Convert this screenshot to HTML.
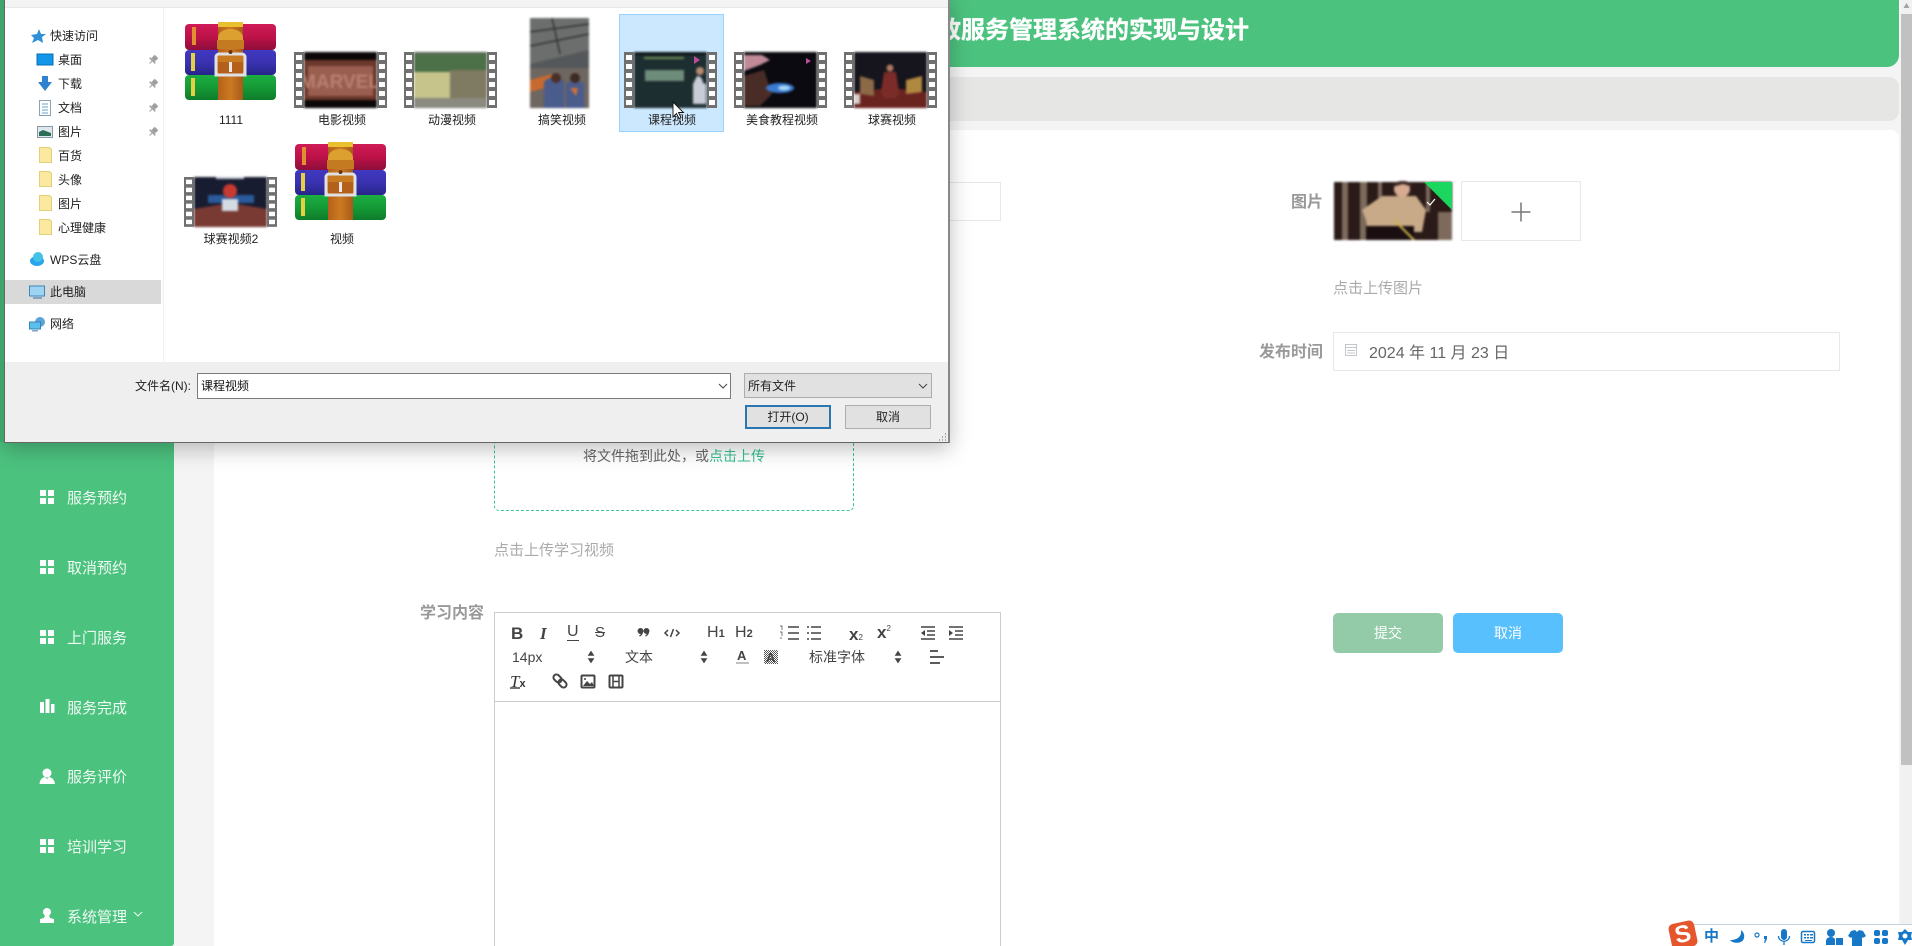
<!DOCTYPE html>
<html lang="zh-CN"><head><meta charset="utf-8"><title>课程视频</title>
<style>
html,body{margin:0;padding:0;width:1912px;height:946px;overflow:hidden;background:#f4f4f4}
body{position:relative;font-family:"Liberation Sans","Noto Sans CJK SC",sans-serif;filter:blur(.3px)}
.a,.t{position:absolute;box-sizing:border-box}
.t{white-space:nowrap;line-height:1}
.m{color:#eefaf2;font-size:15px;left:67px}
.l{color:#999;font-size:16px;font-weight:700}
.h{color:#aaa;font-size:15px}
.n{color:#222;font-size:12px}
.c{color:#222;font-size:12px;width:110px;text-align:center}
svg{position:absolute;overflow:visible}
.im{filter:blur(1.1px)}
</style></head><body>

<!-- page chrome -->
<div class="a" style="left:0;top:0;width:174px;height:946px;background:#4cc27f;border-bottom-right-radius:3px"></div>
<div class="a" style="left:174px;top:-20px;width:1725px;height:87px;background:#4cc27f;border-radius:0 0 12px 12px"></div>
<div class="t" style="left:800px;width:449px;top:19px;text-align:right;color:#fff;font-size:24px;font-weight:700;-webkit-text-stroke:.3px #fff">家政服务管理系统的实现与设计</div>
<div class="a" style="left:174px;top:77px;width:1725px;height:44px;background:#e6e6e5;border-radius:10px"></div>
<div class="a" style="left:214px;top:130px;width:1685px;height:830px;background:#fff;border-radius:8px"></div>
<div class="a" style="left:1901px;top:0;width:11px;height:924px;background:#f1f1f1"></div>
<div class="a" style="left:1901px;top:14px;width:11px;height:751px;background:#c1c1c1"></div>
<svg style="left:0;top:0" width="1912" height="946"><path d="M1906.500 3l3 5h-6z" fill="#a3a3a3"/></svg>

<!-- menu -->
<svg style="left:0;top:0" width="174" height="946" fill="#fff">
<defs><g id="gr"><rect x="40" y="-7" width="6" height="6"/><rect x="48" y="-7" width="6" height="6"/><rect x="40" y="1" width="6" height="6"/><rect x="48" y="1" width="6" height="6"/></g></defs>
<use href="#gr" y="497"/><use href="#gr" y="567"/><use href="#gr" y="637"/><use href="#gr" y="846"/>
<rect x="40" y="702" width="4" height="11"/><rect x="45.500" y="699" width="4" height="14"/><rect x="51" y="704" width="3.500" height="9"/>
<circle cx="47" cy="773" r="4.500"/><path d="M39.500 784c.5-5 3-6.500 5.500-7l2 2 2-2c2.500.5 5.500 2 6 7z"/>
<circle cx="47" cy="912" r="4"/><path d="M45 915h4l1 3 4 1v4H40v-4l4-1z"/>
</svg>
<div class="t m" style="top:491px">服务预约</div>
<div class="t m" style="top:561px">取消预约</div>
<div class="t m" style="top:631px">上门服务</div>
<div class="t m" style="top:701px">服务完成</div>
<div class="t m" style="top:770px">服务评价</div>
<div class="t m" style="top:840px">培训学习</div>
<div class="t m" style="top:910px">系统管理</div>
<svg style="left:0;top:0" width="174" height="946"><path d="M134 912l4 4 4-4" fill="none" stroke="#eefaf2" stroke-width="1"/></svg>

<!-- form -->
<div class="a" style="left:800px;top:182px;width:201px;height:39px;border:1px solid #e8e8e8"></div>
<div class="a" style="left:494px;top:400px;width:360px;height:111px;border:1px dashed #3cc497;border-radius:5px"></div>
<div class="t" style="left:583px;top:449px;font-size:14px;color:#666">将文件拖到此处，或<span style="color:#33c08d">点击上传</span></div>
<div class="t h" style="left:494px;top:543px">点击上传学习视频</div>
<div class="t l" style="left:420px;top:606px">学习内容</div>

<div class="a" style="left:494px;top:612px;width:507px;height:350px;border:1px solid #ccc"></div>
<div class="a" style="left:494px;top:701px;width:507px;height:1px;background:#ccc"></div>
<div class="t" style="left:511px;top:625px;font-size:17px;font-weight:700;color:#444">B</div>
<div class="t" style="left:540px;top:625px;font-size:17px;font-style:italic;font-family:'Liberation Serif',serif;font-weight:700;color:#444">I</div>
<div class="t" style="left:567px;top:624px;font-size:16px;color:#444;border-bottom:1.500px solid #444">U</div>
<div class="t" style="left:595px;top:625px;font-size:15px;color:#444;text-decoration:line-through">S</div>
<div class="t" style="left:707px;top:625px;font-size:16px;color:#444">H<span style="font-size:11px;font-weight:700">1</span></div>
<div class="t" style="left:735px;top:625px;font-size:16px;color:#444">H<span style="font-size:11px;font-weight:700">2</span></div>
<div class="t" style="left:849px;top:626px;font-size:17px;font-weight:700;color:#444">x<span style="font-size:8px;font-weight:400">2</span></div>
<div class="t" style="left:877px;top:624px;font-size:17px;font-weight:700;color:#444">x<span style="font-size:8px;font-weight:400;vertical-align:7px">2</span></div>
<div class="t" style="left:512px;top:650px;font-size:14px;color:#444">14px</div>
<div class="t" style="left:625px;top:650px;font-size:14px;color:#444">文本</div>
<div class="t" style="left:809px;top:650px;font-size:14px;color:#444">标准字体</div>
<div class="t" style="left:737px;top:649px;font-size:13px;font-weight:700;color:#444">A</div>
<svg style="left:0;top:0" width="1912" height="946"><defs><pattern id="ht" width="2" height="2" patternUnits="userSpaceOnUse"><rect width="1" height="1" fill="#555"/><rect x="1" y="1" width="1" height="1" fill="#555"/></pattern></defs><rect x="764" y="650" width="14" height="14" fill="url(#ht)"/></svg>
<div class="t" style="left:766px;top:651px;font-size:13px;font-weight:700;color:#444">A</div>
<div class="t" style="left:510px;top:673px;font-size:17px;font-style:italic;font-family:'Liberation Serif',serif;color:#333;border-bottom:0">T<span style="font-size:11px;font-weight:700;font-style:normal;font-family:'Liberation Sans',sans-serif">x</span></div>
<svg style="left:0;top:0" width="1912" height="946" fill="none" stroke="#444" stroke-width="1.500">
<path d="M510 688h10"/>
<circle cx="640.500" cy="631" r="2.200" fill="#444"/><circle cx="646.500" cy="631" r="2.200" fill="#444"/><path d="M642.500 631c0 2-1 4-3 5M648.500 631c0 2-1 4-3 5" stroke-width="1.300"/>
<path d="M668 630l-3 3 3 3M676 630l3 3-3 3M673.500 629l-3 8" />
<path d="M788 627h11M788 633h11M788 639h11"/><path d="M780 626h2v4M780 632h2v4M780 638h2" stroke-width=".7"/>
<path d="M811 627h10M811 633h10M811 639h10M807 627h2M807 633h2M807 639h2"/>
<path d="M921 627h14M927 631h8M927 635h8M921 639h14"/><path d="M925 630l-4 3 4 3z" fill="#444" stroke="none"/>
<path d="M949 627h14M955 631h8M955 635h8M949 639h14"/><path d="M949 630l4 3-4 3z" fill="#444" stroke="none"/>
<path d="M589 655l2-3 2 3zM589 659l2 3 2-3z" fill="#444"/><path d="M702 655l2-3 2 3zM702 659l2 3 2-3z" fill="#444"/><path d="M896 655l2-3 2 3zM896 659l2 3 2-3z" fill="#444"/>
<path d="M736 663h13" stroke="#aaa" stroke-width="1.500"/>
<path d="M930 651h8M930 657h14M930 663h10" stroke-width="1.800"/>
<g transform="rotate(45 560 681)" stroke-width="2"><rect x="552" y="678" width="9" height="6" rx="3"/><rect x="559" y="678" width="9" height="6" rx="3"/></g>
<rect x="581.500" y="675.500" width="13" height="12" rx="1" stroke-width="2"/><path d="M583 686l4-5 3 3 2-2 2 4z" fill="#444" stroke="none"/><circle cx="585" cy="679" r="1" fill="#444" stroke="none"/>
<rect x="609.500" y="675.500" width="13" height="12" rx="1" stroke-width="2"/><path d="M613 675v13M619 675v13M613 681.500h6"/>
</svg>

<!-- right column -->
<div class="t l" style="left:1291px;top:195px">图片</div>
<svg style="left:1334px;top:182px" width="118" height="58">
<g class="im"><rect width="118" height="58" fill="#2a1a18"/>
<g fill="#7d6a5c"><rect x="8" width="6" height="58"/><rect x="26" width="7" height="58"/><rect x="44" width="4" height="26"/><rect x="104" y="30" width="14" height="28"/><rect x="92" width="4" height="30"/></g>
<path d="M28 28l20-14h34l10 14-4 22H34l-2-12z" fill="#c8aa88"/>
<circle cx="68" cy="7" r="8" fill="#d8ab93"/><path d="M58 5c2-8 20-8 21 0l-10-3z" fill="#3a2522"/>
<rect x="32" y="44" width="48" height="14" fill="#1a0e10"/>
<path d="M60 38l20 20" stroke="#c9b24e" stroke-width="2"/></g>
<path d="M90 0h28v28z" fill="#1bd760"/>
<path d="M93 20l3 3 5-6" stroke="#fff" stroke-width="1.200" fill="none"/>
</svg>
<div class="a" style="left:1461px;top:181px;width:120px;height:60px;border:1px solid #e8e8e8;background:#fff"></div>
<svg style="left:0;top:0" width="1912" height="946"><path d="M1511.500 212h19M1521 202.500v19" stroke="#777" stroke-width="1.500"/></svg>
<div class="t h" style="left:1333px;top:281px">点击上传图片</div>
<div class="t l" style="left:1259px;top:345px">发布时间</div>
<div class="a" style="left:1333px;top:332px;width:507px;height:39px;border:1px solid #e8e8e8"></div>
<svg style="left:0;top:0" width="1912" height="946" fill="none" stroke="#c4c8cc"><rect x="1345.500" y="344.500" width="11" height="11"/><path d="M1345 347.500h12M1347 350.500h8M1347 353h8"/></svg>
<div class="t" style="left:1369px;top:346px;font-size:16px;color:#666">2024 年 11 月 23 日</div>
<div class="t" style="left:1333px;top:613px;width:110px;height:40px;line-height:40px;text-align:center;background:#93cba8;border-radius:5px;color:#fff;font-size:14px">提交</div>
<div class="t" style="left:1453px;top:613px;width:110px;height:40px;line-height:40px;text-align:center;background:#57c0fd;border-radius:5px;color:#fff;font-size:14px">取消</div>

<!-- IME bar -->
<div class="a" style="left:1690px;top:924px;width:222px;height:22px;background:#fff;border-top:1px solid #c4d2e2"></div>
<div class="t" style="left:1670px;top:922px;width:26px;height:26px;line-height:25px;text-align:center;background:#e5562c;border-radius:5px;transform:rotate(-12deg);color:#fff;font-size:24px;font-weight:700">S</div>
<div class="t" style="left:1704px;top:929px;font-size:15px;font-weight:700;color:#1678c6">中</div>
<svg style="left:0;top:0" width="1912" height="946" fill="#1678c6">
<path d="M1741 930c1 6-3 10-11 10 3 4 13 4 14-2 .8-3-.4-6-3-8z"/>
<circle cx="1757" cy="935" r="2" fill="none" stroke="#1678c6" stroke-width="1.200"/><path d="M1764 936h3v3l-2 4h-1l1-4h-1z"/>
<rect x="1781" y="929" width="6" height="11" rx="3"/><path d="M1778.500 936c0 7 11 7 11 0M1784 941v4" fill="none" stroke="#1678c6" stroke-width="1.300"/>
<rect x="1801.500" y="931.500" width="13" height="11" rx="1.500" fill="none" stroke="#1678c6" stroke-width="1.500"/><path d="M1804 934h2v1.500h-2zM1807 934h2v1.500h-2zM1810 934h3v1.500h-3zM1804 937h2v1.500h-2zM1807 937h2v1.500h-2zM1810 937h3v1.500h-3zM1805 940h7v1h-7z"/>
<circle cx="1831" cy="933" r="4"/><path d="M1826 945v-4c0-3 3-4 5-4s3 1 4 2v6z"/><rect x="1836" y="938" width="7" height="7"/>
<path d="M1851 931l4-1 2 2 2-2 4 1 3 5-3 2-1-1v9h-10v-9l-1 1-3-2z"/>
<rect x="1874" y="930" width="6" height="6" rx="2"/><rect x="1882" y="930" width="6" height="6" rx="2"/><rect x="1874" y="938" width="6" height="6" rx="2"/><rect x="1882" y="938" width="6" height="6" rx="2"/>
<path d="M1905 929l3 3h4l-1 4 1 4h-4l-3 5-3-5h-4l1-4-1-4h4z"/><circle cx="1905" cy="936" r="2.500" fill="#fff"/>
</svg>

<!-- dialog -->
<div class="a" style="left:4px;top:-5px;width:946px;height:448px;background:#fff;border:1px solid #666;border-right:2px solid #888;box-shadow:0 6px 20px rgba(0,0,0,.25)"></div>
<div class="a" style="left:5px;top:0;width:943px;height:8px;background:#f3f3f3;border-bottom:1px solid #e8e8e8"></div>
<div class="a" style="left:0;top:0;width:4px;height:442px;background:#3da56b"></div>
<div class="a" style="left:163px;top:8px;width:1px;height:354px;background:#f0f0f0"></div>
<div class="a" style="left:5px;top:362px;width:943px;height:80px;background:#efefef"></div>
<div class="a" style="left:5px;top:280px;width:156px;height:24px;background:#d9d9d9"></div>

<div class="t n" style="left:50px;top:30px">快速访问</div>
<div class="t n" style="left:58px;top:54px">桌面</div>
<div class="t n" style="left:58px;top:78px">下载</div>
<div class="t n" style="left:58px;top:102px">文档</div>
<div class="t n" style="left:58px;top:126px">图片</div>
<div class="t n" style="left:58px;top:150px">百货</div>
<div class="t n" style="left:58px;top:174px">头像</div>
<div class="t n" style="left:58px;top:198px">图片</div>
<div class="t n" style="left:58px;top:222px">心理健康</div>
<div class="t n" style="left:50px;top:254px">WPS云盘</div>
<div class="t n" style="left:50px;top:286px">此电脑</div>
<div class="t n" style="left:50px;top:318px">网络</div>

<svg style="left:0;top:0" width="200" height="340">
<defs>
<g id="pin" transform="translate(153 0) rotate(45)"><rect x="-2.500" y="-5" width="5" height="5" fill="#a0a0a0"/><rect x="-4" y="0" width="8" height="1.500" fill="#a0a0a0"/><rect x="-.5" y="1" width="1" height="4" fill="#a0a0a0"/></g>
<g id="fo"><path d="M39.500 -7.500h10l2 2v13h-12z" fill="#fce9a0" stroke="#e3cf7c"/></g>
</defs>
<path d="M39 29l2 5h5l-4 3 1 6-5-3-6 3 2-5-3-3 6-1z" fill="#2f8fd8"/>
<rect x="37" y="54" width="16" height="11" fill="#1296e8" stroke="#0a6fb5"/>
<path d="M42 76h6v6h4l-7 9-7-9h4z" fill="#2d82d2"/>
<rect x="39.500" y="100.500" width="11" height="15" fill="#fff" stroke="#8aa0b4"/><path d="M42 104h6M42 107h6M42 110h6M42 113h6" stroke="#6aa0c8"/>
<rect x="37.500" y="126.500" width="15" height="11" fill="#dfe8f0" stroke="#8a98a5"/><path d="M39 136v-4l4-2 8 3v3z" fill="#2c6d55"/>
<g transform="translate(0 60)"><use href="#pin"/></g><g transform="translate(0 84)"><use href="#pin"/></g><g transform="translate(0 108)"><use href="#pin"/></g><g transform="translate(0 132)"><use href="#pin"/></g>
<use href="#fo" y="155"/><use href="#fo" y="179"/><use href="#fo" y="203"/><use href="#fo" y="227"/>
<ellipse cx="37" cy="261" rx="7" ry="5" fill="#2ba5ea"/><circle cx="38" cy="257" r="5" fill="#43c2e6"/>
<rect x="29.500" y="286" width="15" height="10" fill="#9ed4f2" stroke="#3d87ba"/><rect x="33" y="297" width="9" height="2" fill="#7da6c2"/>
<circle cx="40" cy="322" r="5" fill="#5aa4d8"/><rect x="29.500" y="322" width="11" height="7" fill="#5cc0ee" stroke="#3585b8"/><rect x="32" y="330" width="6" height="1.500" fill="#7da6c2"/>
</svg>

<!-- file icons -->
<div class="a" style="left:619px;top:14px;width:105px;height:118px;background:#cce8ff;border:1px solid #99d1ff"></div>
<svg style="left:0;top:0" width="948" height="260">
<defs>
<linearGradient id="r" x2="0" y2="1"><stop offset="0" stop-color="#cf1a55"/><stop offset=".5" stop-color="#bd1248"/><stop offset="1" stop-color="#8e0e3a"/></linearGradient>
<linearGradient id="b" x2="0" y2="1"><stop offset="0" stop-color="#4038c0"/><stop offset=".5" stop-color="#3a32b0"/><stop offset="1" stop-color="#26248a"/></linearGradient>
<linearGradient id="g" x2="0" y2="1"><stop offset="0" stop-color="#1cae40"/><stop offset=".5" stop-color="#149a36"/><stop offset="1" stop-color="#0e7c2a"/></linearGradient>
<linearGradient id="s" x2="1" y2="0"><stop offset="0" stop-color="#b5601a"/><stop offset=".5" stop-color="#cc7a22"/><stop offset="1" stop-color="#a85a18"/></linearGradient>
<g id="rar">
<rect x="0" y="2" width="91" height="26" rx="4" fill="url(#r)"/>
<rect x="0" y="28" width="91" height="25" rx="4" fill="url(#b)"/>
<rect x="0" y="53" width="91" height="25" rx="4" fill="url(#g)"/>
<rect x="7" y="5" width="4" height="18" fill="#e09030"/><rect x="6" y="31" width="4" height="18" fill="#e4d040"/><rect x="6" y="56" width="4" height="18" fill="#e4d040"/>
<rect x="33" y="0" width="25" height="78" fill="url(#s)"/>
<path d="M33 16c0-12 25-12 25 0v8H33z" fill="#dca030"/><rect x="33" y="0" width="25" height="5" fill="#e8c030"/>
<rect x="32" y="18" width="27" height="9" fill="#c47a20"/>
<rect x="31" y="32" width="29" height="21" rx="3" fill="#c87a22" stroke="#dfe1e4" stroke-width="3"/>
<rect x="33" y="40" width="25" height="14" fill="#b5601a"/>
<path d="M31 40v13h29V40" fill="none" stroke="#dfe1e4" stroke-width="3"/>
<rect x="44" y="40" width="3" height="10" fill="#e8e8e8"/><circle cx="45.500" cy="30" r="2" fill="#6a3410"/>
</g>
<g id="holes" fill="#fff"><rect x="2" y="3" width="6" height="5"/><rect x="2" y="12" width="6" height="5"/><rect x="2" y="21" width="6" height="5"/><rect x="2" y="30" width="6" height="5"/><rect x="2" y="39" width="6" height="5"/><rect x="2" y="48" width="6" height="5"/></g>
<g id="fr"><rect x="0" y="0" width="10" height="56" fill="#707070"/><rect x="83" y="0" width="10" height="56" fill="#707070"/><use href="#holes"/><use href="#holes" x="83"/></g>
</defs>
<use href="#rar" x="185" y="22"/>
<use href="#rar" x="295" y="142"/>

<g transform="translate(294 52)"><g class="im"><rect x="10" width="73" height="56" fill="#0c0808"/><rect x="10" y="8" width="73" height="40" fill="#6a382c"/><rect x="14" y="14" width="65" height="30" fill="#9a5e50"/><text x="46" y="36" font-size="19" font-weight="700" text-anchor="middle" fill="#b88070" font-family="Liberation Sans">MARVEL</text></g><use href="#fr"/></g>
<g transform="translate(404 52)"><g class="im"><rect x="10" width="73" height="56" fill="#5a6a58"/><rect x="10" y="2" width="73" height="18" fill="#4c7048"/><rect x="10" y="20" width="36" height="26" fill="#c6c48a"/><rect x="46" y="18" width="37" height="30" fill="#7f7a62"/><rect x="10" y="46" width="73" height="10" fill="#8a8a80"/></g><use href="#fr"/></g>
<g transform="translate(530 18)"><g class="im"><rect width="59" height="90" fill="#55585a"/><path d="M0 0h59v32L0 46z" fill="#6c6e6e"/><path d="M0 14l59-8M0 28l59-12M22 0l8 36" stroke="#333" stroke-width="1.500" fill="none"/><rect y="50" width="59" height="40" fill="#6e6660"/><path d="M0 62l22-6v12l-22 6z" fill="#c86a30"/><path d="M14 64c4-6 16-6 20 0v26H14z" fill="#4a5c8c"/><path d="M36 66c4-4 14-4 18 0v24H36z" fill="#4a5c8c"/><circle cx="26" cy="60" r="5" fill="#4a3028"/><circle cx="45" cy="60" r="5" fill="#3c2a24"/><path d="M40 70l8 0-2 8z" fill="#d0703a"/></g></g>
<g transform="translate(624 52)"><g class="im"><rect x="10" width="73" height="56" fill="#1d2e30"/><rect x="10" width="73" height="3" fill="#10181a"/><rect x="21" y="18" width="39" height="11" fill="#6e8c7a"/><path d="M20 6h40" stroke="#8ea85a" stroke-width="1.500"/><path d="M73 24c4 0 6 4 6 7l3 1v20H69V32z" fill="#c8ccd6"/><circle cx="76" cy="19" r="4" fill="#b88a70"/></g><path d="M70 4l6 4-6 4z" fill="#c04a9a"/><use href="#fr"/></g>
<g transform="translate(734 52)"><g class="im"><rect x="10" width="73" height="56" fill="#0a0a10"/><path d="M10 3h18l8 5-10 5-16 6z" fill="#c08a98"/><path d="M10 24l20-6 8 24-12 12H10z" fill="#4a2c26"/><ellipse cx="46" cy="36" rx="14" ry="5" fill="#3a7ad0"/><ellipse cx="50" cy="36" rx="6" ry="2.500" fill="#a8d4f4"/></g><path d="M72 6l5 3-5 3z" fill="#c04a9a"/><use href="#fr"/></g>
<g transform="translate(844 52)"><g class="im"><rect x="10" width="73" height="56" fill="#16141c"/><path d="M10 56V40l36-4 37 4v16z" fill="#6a2420"/><path d="M16 24l14 4v16l-14-2z" fill="#8c6a48"/><path d="M62 28l16-4v16l-16 2z" fill="#b08840"/><path d="M40 20h12l3 20-3 6h-12l-3-6z" fill="#7c2c28"/><circle cx="46" cy="16" r="3.500" fill="#b07860"/><path d="M10 42h6v10h-6z" fill="#d8d0c8"/></g><use href="#fr"/></g>
<g transform="translate(184 177)"><g class="im"><rect x="10" width="73" height="50" fill="#181c30"/><path d="M10 32l36-6 37 6v18H10z" fill="#7a3a34"/><rect x="24" y="18" width="46" height="8" fill="#2a5a9a"/><circle cx="46" cy="14" r="7" fill="#c83a30"/><rect x="38" y="22" width="16" height="12" fill="#d4dce4"/><rect x="32" y="0" width="28" height="2" fill="#c0c8d0"/></g><g transform="scale(1 .89)"><use href="#fr"/></g></g>
</svg>
<div class="t c" style="left:176px;top:114px">1111</div>
<div class="t c" style="left:287px;top:114px">电影视频</div>
<div class="t c" style="left:397px;top:114px">动漫视频</div>
<div class="t c" style="left:507px;top:114px">搞笑视频</div>
<div class="t c" style="left:617px;top:114px">课程视频</div>
<div class="t c" style="left:727px;top:114px">美食教程视频</div>
<div class="t c" style="left:837px;top:114px">球赛视频</div>
<div class="t c" style="left:176px;top:233px">球赛视频2</div>
<div class="t c" style="left:287px;top:233px">视频</div>
<svg style="left:0;top:0" width="948" height="130"><path d="M673 102v15l3.500-3.500 2.500 5 2-1-2.500-5h5z" fill="#fff" stroke="#111" stroke-width=".9"/></svg>

<!-- dialog footer -->
<div class="t n" style="left:135px;top:380px">文件名(N):</div>
<div class="a" style="left:197px;top:373px;width:534px;height:26px;background:#fff;border:1px solid #7a7a7a"></div>
<div class="t n" style="left:201px;top:380px;color:#111">课程视频</div>
<div class="a" style="left:744px;top:373px;width:188px;height:25px;background:#e1e1e1;border:1px solid #adadad"></div>
<div class="t n" style="left:748px;top:380px">所有文件</div>
<svg style="left:0;top:0" width="948" height="442" fill="none" stroke="#444"><path d="M719 384l4 4 4-4M919 384l4 4 4-4"/><path d="M945 434h1M942 437h1M945 437h1M939 440h1M942 440h1M945 440h1" stroke="#aaa" stroke-width="2"/></svg>
<div class="t" style="left:745px;top:405px;width:86px;height:24px;line-height:20px;text-align:center;background:#e1e1e1;border:2px solid #2a76b0;font-size:12px;color:#222">打开(O)</div>
<div class="t" style="left:845px;top:405px;width:86px;height:24px;line-height:22px;text-align:center;background:#e1e1e1;border:1px solid #adadad;font-size:12px;color:#222">取消</div>
</body></html>
